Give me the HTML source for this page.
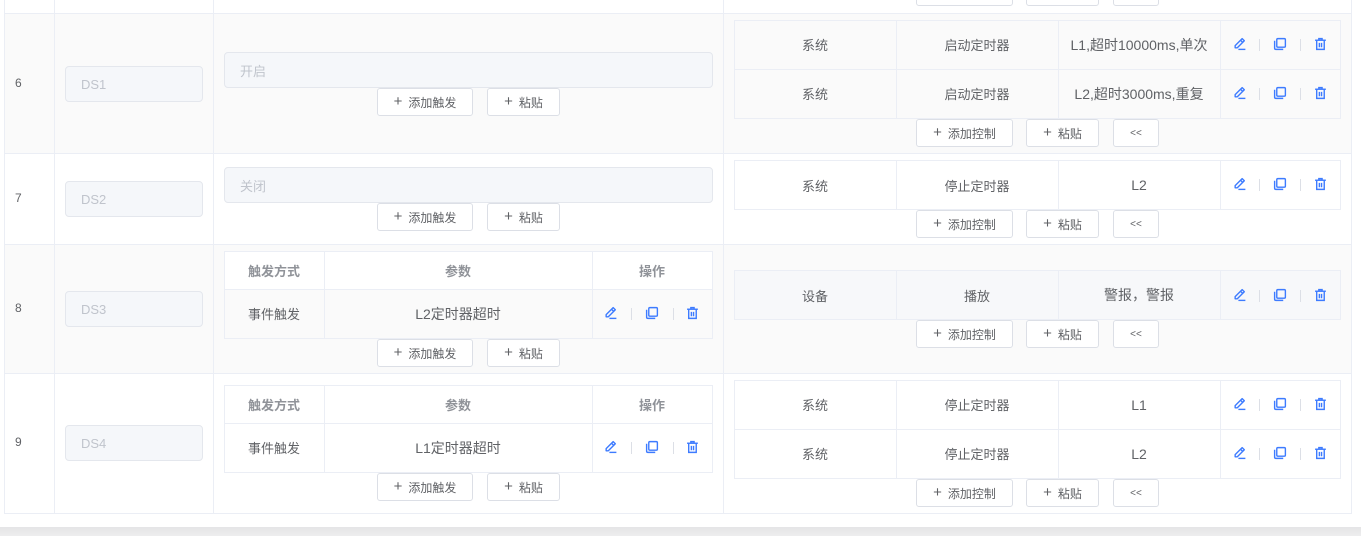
<!DOCTYPE html>
<html><head><meta charset="utf-8">
<style>
*{box-sizing:border-box;margin:0;padding:0}
body{width:1361px;height:536px;overflow:hidden;background:#fff;font-family:"Liberation Sans","Noto Sans CJK SC",sans-serif;font-size:13px;color:#606266;position:relative}
.a{position:absolute}
.row{position:absolute;left:4px;width:1347px}
.vl{position:absolute;width:1px;background:#ebeef5}
.hl{position:absolute;height:1px;background:#ebeef5}
.idx{position:absolute;left:15px;font-size:12px;color:#606266}
.inp{position:absolute;background:#f5f7fa;border:1px solid #e4e7ed;border-radius:4px;color:#c0c4cc;font-size:13px;padding-left:15px;display:flex;align-items:center}
.btn{position:absolute;height:28px;background:#fff;border:1px solid #dcdfe6;border-radius:3px;font-size:12px;color:#606266;display:flex;align-items:center;justify-content:center;white-space:nowrap}
.btn b{font-weight:normal;font-size:15px;margin-right:6px;color:#606266;position:relative;top:-1px}
.tbl{position:absolute;border:1px solid #ebeef5}
.c{position:absolute;display:flex;align-items:center;justify-content:center;font-size:13px;color:#606266;white-space:nowrap}
.h{color:#909399;font-weight:bold}
.sep{position:absolute;width:1px;height:12px;background:#dcdfe6}
svg{position:absolute}
</style></head><body>

<!-- top row remnant -->
<div class="btn" style="left:916px;top:-22px;width:97px"></div>
<div class="btn" style="left:1026px;top:-22px;width:73px"></div>
<div class="btn" style="left:1113px;top:-22px;width:46px"></div>

<!-- row backgrounds -->
<div class="row" style="top:13px;height:141px;background:#fafafa"></div>
<div class="row" style="top:153px;height:92px;background:#fff"></div>
<div class="row" style="top:244px;height:130px;background:#fafafa"></div>
<div class="row" style="top:373px;height:141px;background:#fff"></div>

<!-- grid -->
<div class="vl" style="left:4px;top:0;height:514px"></div>
<div class="vl" style="left:54px;top:0;height:514px"></div>
<div class="vl" style="left:213px;top:0;height:514px"></div>
<div class="vl" style="left:723px;top:0;height:514px"></div>
<div class="vl" style="left:1351px;top:0;height:514px"></div>
<div class="hl" style="left:4px;top:13px;width:1348px"></div>
<div class="hl" style="left:4px;top:153px;width:1348px"></div>
<div class="hl" style="left:4px;top:244px;width:1348px"></div>
<div class="hl" style="left:4px;top:373px;width:1348px"></div>
<div class="hl" style="left:4px;top:513px;width:1348px"></div>

<!-- bottom shadow -->
<div class="a" style="left:0;top:527px;width:1361px;height:9px;background:linear-gradient(#e4e4e6,#ededee)"></div>

<!-- ROW 6 -->
<div class="idx" style="top:76px">6</div>
<div class="inp" style="left:65px;top:66px;width:138px;height:36px">DS1</div>
<div class="inp" style="left:224px;top:52px;width:489px;height:36px">开启</div>
<div class="btn" style="left:377px;top:88px;width:96px"><b>+</b>添加触发</div>
<div class="btn" style="left:487px;top:88px;width:73px"><b>+</b>粘贴</div>

<div class="tbl" style="left:734px;top:20px;width:607px;height:99px;background:#fafafa"></div>
<div class="hl" style="left:734px;top:69px;width:607px"></div>
<div class="vl" style="left:896px;top:20px;height:99px"></div>
<div class="vl" style="left:1058px;top:20px;height:99px"></div>
<div class="vl" style="left:1220px;top:20px;height:99px"></div>
<div class="c" style="left:734px;top:20px;width:162px;height:49px">系统</div>
<div class="c" style="left:896px;top:20px;width:162px;height:49px">启动定时器</div>
<div class="c" style="left:1058px;top:20px;width:162px;height:49px;font-size:14px">L1,超时10000ms,单次</div>
<div class="c" style="left:734px;top:69px;width:162px;height:49px">系统</div>
<div class="c" style="left:896px;top:69px;width:162px;height:49px">启动定时器</div>
<div class="c" style="left:1058px;top:69px;width:162px;height:49px;font-size:14px">L2,超时3000ms,重复</div>
<div class="btn" style="left:916px;top:119px;width:97px"><b>+</b>添加控制</div>
<div class="btn" style="left:1026px;top:119px;width:73px"><b>+</b>粘贴</div>
<div class="btn" style="left:1113px;top:119px;width:46px;font-size:10px">&lt;&lt;</div>

<!-- ROW 7 -->
<div class="idx" style="top:191px">7</div>
<div class="inp" style="left:65px;top:181px;width:138px;height:36px">DS2</div>
<div class="inp" style="left:224px;top:167px;width:489px;height:36px">关闭</div>
<div class="btn" style="left:377px;top:203px;width:96px"><b>+</b>添加触发</div>
<div class="btn" style="left:487px;top:203px;width:73px"><b>+</b>粘贴</div>

<div class="tbl" style="left:734px;top:160px;width:607px;height:50px;background:#fff"></div>
<div class="vl" style="left:896px;top:160px;height:50px"></div>
<div class="vl" style="left:1058px;top:160px;height:50px"></div>
<div class="vl" style="left:1220px;top:160px;height:50px"></div>
<div class="c" style="left:734px;top:160px;width:162px;height:50px">系统</div>
<div class="c" style="left:896px;top:160px;width:162px;height:50px">停止定时器</div>
<div class="c" style="left:1058px;top:160px;width:162px;height:50px;font-size:14px">L2</div>
<div class="btn" style="left:916px;top:210px;width:97px"><b>+</b>添加控制</div>
<div class="btn" style="left:1026px;top:210px;width:73px"><b>+</b>粘贴</div>
<div class="btn" style="left:1113px;top:210px;width:46px;font-size:10px">&lt;&lt;</div>

<!-- ROW 8 -->
<div class="idx" style="top:301px">8</div>
<div class="inp" style="left:65px;top:291px;width:138px;height:36px">DS3</div>
<div class="tbl" style="left:224px;top:251px;width:489px;height:88px;background:#fff"></div>
<div class="a" style="left:225px;top:290px;width:487px;height:48px;background:#fafafa"></div>
<div class="hl" style="left:224px;top:289px;width:489px"></div>
<div class="vl" style="left:324px;top:251px;height:88px"></div>
<div class="vl" style="left:592px;top:251px;height:88px"></div>
<div class="c h" style="left:224px;top:251px;width:100px;height:38px">触发方式</div>
<div class="c h" style="left:324px;top:251px;width:268px;height:38px">参数</div>
<div class="c h" style="left:592px;top:251px;width:120px;height:38px">操作</div>
<div class="c" style="left:224px;top:289px;width:100px;height:49px">事件触发</div>
<div class="c" style="left:324px;top:289px;width:268px;height:49px;font-size:14px">L2定时器超时</div>
<div class="btn" style="left:377px;top:339px;width:96px"><b>+</b>添加触发</div>
<div class="btn" style="left:487px;top:339px;width:73px"><b>+</b>粘贴</div>

<div class="tbl" style="left:734px;top:270px;width:607px;height:50px;background:#f7f8fa"></div>
<div class="vl" style="left:896px;top:270px;height:50px"></div>
<div class="vl" style="left:1058px;top:270px;height:50px"></div>
<div class="vl" style="left:1220px;top:270px;height:50px"></div>
<div class="c" style="left:734px;top:270px;width:162px;height:50px">设备</div>
<div class="c" style="left:896px;top:270px;width:162px;height:50px">播放</div>
<div class="c" style="left:1058px;top:270px;width:162px;height:50px;font-size:14px">警报，警报</div>
<div class="btn" style="left:916px;top:320px;width:97px"><b>+</b>添加控制</div>
<div class="btn" style="left:1026px;top:320px;width:73px"><b>+</b>粘贴</div>
<div class="btn" style="left:1113px;top:320px;width:46px;font-size:10px">&lt;&lt;</div>

<!-- ROW 9 -->
<div class="idx" style="top:435px">9</div>
<div class="inp" style="left:65px;top:425px;width:138px;height:36px">DS4</div>
<div class="tbl" style="left:224px;top:385px;width:489px;height:88px;background:#fff"></div>
<div class="hl" style="left:224px;top:423px;width:489px"></div>
<div class="vl" style="left:324px;top:385px;height:88px"></div>
<div class="vl" style="left:592px;top:385px;height:88px"></div>
<div class="c h" style="left:224px;top:385px;width:100px;height:38px">触发方式</div>
<div class="c h" style="left:324px;top:385px;width:268px;height:38px">参数</div>
<div class="c h" style="left:592px;top:385px;width:120px;height:38px">操作</div>
<div class="c" style="left:224px;top:423px;width:100px;height:49px">事件触发</div>
<div class="c" style="left:324px;top:423px;width:268px;height:49px;font-size:14px">L1定时器超时</div>
<div class="btn" style="left:377px;top:473px;width:96px"><b>+</b>添加触发</div>
<div class="btn" style="left:487px;top:473px;width:73px"><b>+</b>粘贴</div>

<div class="tbl" style="left:734px;top:380px;width:607px;height:99px;background:#fff"></div>
<div class="hl" style="left:734px;top:429px;width:607px"></div>
<div class="vl" style="left:896px;top:380px;height:99px"></div>
<div class="vl" style="left:1058px;top:380px;height:99px"></div>
<div class="vl" style="left:1220px;top:380px;height:99px"></div>
<div class="c" style="left:734px;top:380px;width:162px;height:49px">系统</div>
<div class="c" style="left:896px;top:380px;width:162px;height:49px">停止定时器</div>
<div class="c" style="left:1058px;top:380px;width:162px;height:49px;font-size:14px">L1</div>
<div class="c" style="left:734px;top:429px;width:162px;height:49px">系统</div>
<div class="c" style="left:896px;top:429px;width:162px;height:49px">停止定时器</div>
<div class="c" style="left:1058px;top:429px;width:162px;height:49px;font-size:14px">L2</div>
<div class="btn" style="left:916px;top:479px;width:97px"><b>+</b>添加控制</div>
<div class="btn" style="left:1026px;top:479px;width:73px"><b>+</b>粘贴</div>
<div class="btn" style="left:1113px;top:479px;width:46px;font-size:10px">&lt;&lt;</div>

<!-- ICONS -->
<svg width="0" height="0" style="position:absolute">
<defs>
<g id="pen" fill="none" stroke="#3d7bff" stroke-width="1.3" stroke-linejoin="round">
<path d="M8.5 1.5l2 2-6.5 6.5H2v-2z"/><path d="M7 3l2 2"/><path d="M5 11.5h6.5"/>
</g>
<g id="cp" fill="none" stroke="#3d7bff" stroke-width="1.3">
<rect x="3.5" y="1.5" width="8" height="8" rx="1"/><path d="M1.5 3.5v7a1 1 0 0 0 1 1h7"/>
</g>
<g id="tr" fill="none" stroke="#3d7bff" stroke-width="1.3">
<path d="M1 3h10"/><path d="M4.5 3V1.5h3V3"/><path d="M2.5 3v8.5h7V3"/><path d="M5 5.5v4M7 5.5v4"/>
</g>
</defs></svg>

<div id="icons"></div>
<script>
var ys=[37,86,177,288,397,446], out='';
function ic(x,y,id){return '<svg style="left:'+x+'px;top:'+y+'px" width="14" height="14" viewBox="0 0 13 13"><use href="#'+id+'"/></svg>';}
ys.forEach(function(y){
 out+=ic(1233,y,'pen');
 out+='<div class="sep" style="left:1259px;top:'+(y+2)+'px"></div>';
 out+=ic(1273,y,'cp');
 out+='<div class="sep" style="left:1300px;top:'+(y+2)+'px"></div>';
 out+=ic(1314,y,'tr');
});
[306,440].forEach(function(y){
 out+=ic(604,y,'pen');
 out+='<div class="sep" style="left:631px;top:'+(y+2)+'px"></div>';
 out+=ic(645,y,'cp');
 out+='<div class="sep" style="left:673px;top:'+(y+2)+'px"></div>';
 out+=ic(686,y,'tr');
});
document.getElementById('icons').innerHTML=out;
</script>
</body></html>
